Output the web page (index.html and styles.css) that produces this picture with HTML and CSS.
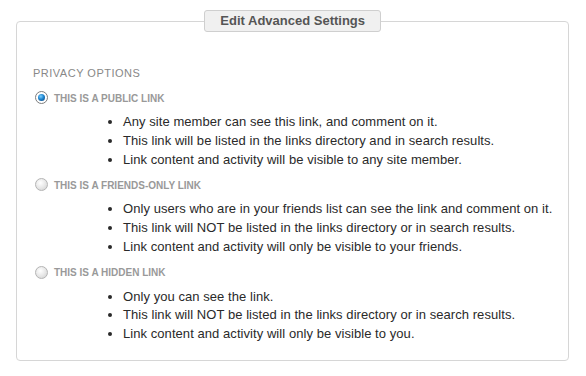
FILE: index.html
```html
<!DOCTYPE html>
<html>
<head>
<meta charset="utf-8">
<link rel="stylesheet" href="styles.css">
</head>
<body>
<div class="wrap">
  <fieldset class="panel">
    <legend class="panel-title">Edit Advanced Settings</legend>
    <div class="section-title">PRIVACY OPTIONS</div>
    <div class="option">
      <div class="option-head"><span class="radio checked"></span><span class="option-label">THIS IS A PUBLIC LINK</span></div>
      <ul class="option-list">
        <li>Any site member can see this link, and comment on it.</li>
        <li>This link will be listed in the links directory and in search results.</li>
        <li>Link content and activity will be visible to any site member.</li>
      </ul>
    </div>
    <div class="option">
      <div class="option-head"><span class="radio"></span><span class="option-label">THIS IS A FRIENDS-ONLY LINK</span></div>
      <ul class="option-list">
        <li>Only users who are in your friends list can see the link and comment on it.</li>
        <li>This link will NOT be listed in the links directory or in search results.</li>
        <li>Link content and activity will only be visible to your friends.</li>
      </ul>
    </div>
    <div class="option">
      <div class="option-head"><span class="radio"></span><span class="option-label">THIS IS A HIDDEN LINK</span></div>
      <ul class="option-list">
        <li>Only you can see the link.</li>
        <li>This link will NOT be listed in the links directory or in search results.</li>
        <li>Link content and activity will only be visible to you.</li>
      </ul>
    </div>
  </fieldset>
</div>
</body>
</html>
```
FILE: styles.css
```css
html, body {
  margin: 0;
  padding: 0;
  background: #fff;
  font-family: "Liberation Sans", Arial, sans-serif;
}
.wrap {
  padding: 10px 17px 0 16px;
}
.panel {
  margin: 0;
  border: 1px solid #d6d6d6;
  border-radius: 4px;
  padding: 0 16px 16px 16px;
}
.panel-title {
  margin: 0 auto;
  padding: 2px 15px 3px;
  border: 1px solid #cfcfcf;
  border-radius: 3px;
  background: #f0f0f0;
  color: #555;
  font-weight: bold;
  font-size: 13px;
  line-height: 15px;
}
.section-title {
  margin-top: 35px;
  font-size: 11px;
  letter-spacing: 0.5px;
  line-height: 12px;
  color: #888;
}
.option-head {
  display: flex;
  align-items: center;
  gap: 6px;
  margin-top: 12px;
  padding-left: 2px;
  height: 13px;
}
.radio {
  width: 11px;
  height: 11px;
  border-radius: 50%;
  border: 1px solid #b4b4b4;
  background: radial-gradient(circle at 40% 35%, #fff 0, #e8e8e8 50%, #cfcfcf 100%);
  position: relative;
  flex: none;
}
.radio.checked {
  border-color: #7d7d7d;
  background: #fff;
}
.radio.checked::after {
  content: "";
  position: absolute;
  left: 2px;
  top: 2px;
  width: 7px;
  height: 7px;
  border-radius: 50%;
  background: radial-gradient(circle at 40% 35%, #7fd0ff 0, #1f86d0 45%, #0a3a70 100%);
}
.option-label {
  font-size: 10px;
  font-weight: bold;
  color: #999;
  line-height: 12px;
  padding-top: 2px;
}
.option-list {
  margin: 9px 0 0 0;
  padding-left: 90px;
  font-size: 13px;
  letter-spacing: 0.06px;
  line-height: 18.75px;
  color: #2a2a2a;
  white-space: nowrap;
}
.option + .option .option-head {
  margin-top: 9px;
}
```
